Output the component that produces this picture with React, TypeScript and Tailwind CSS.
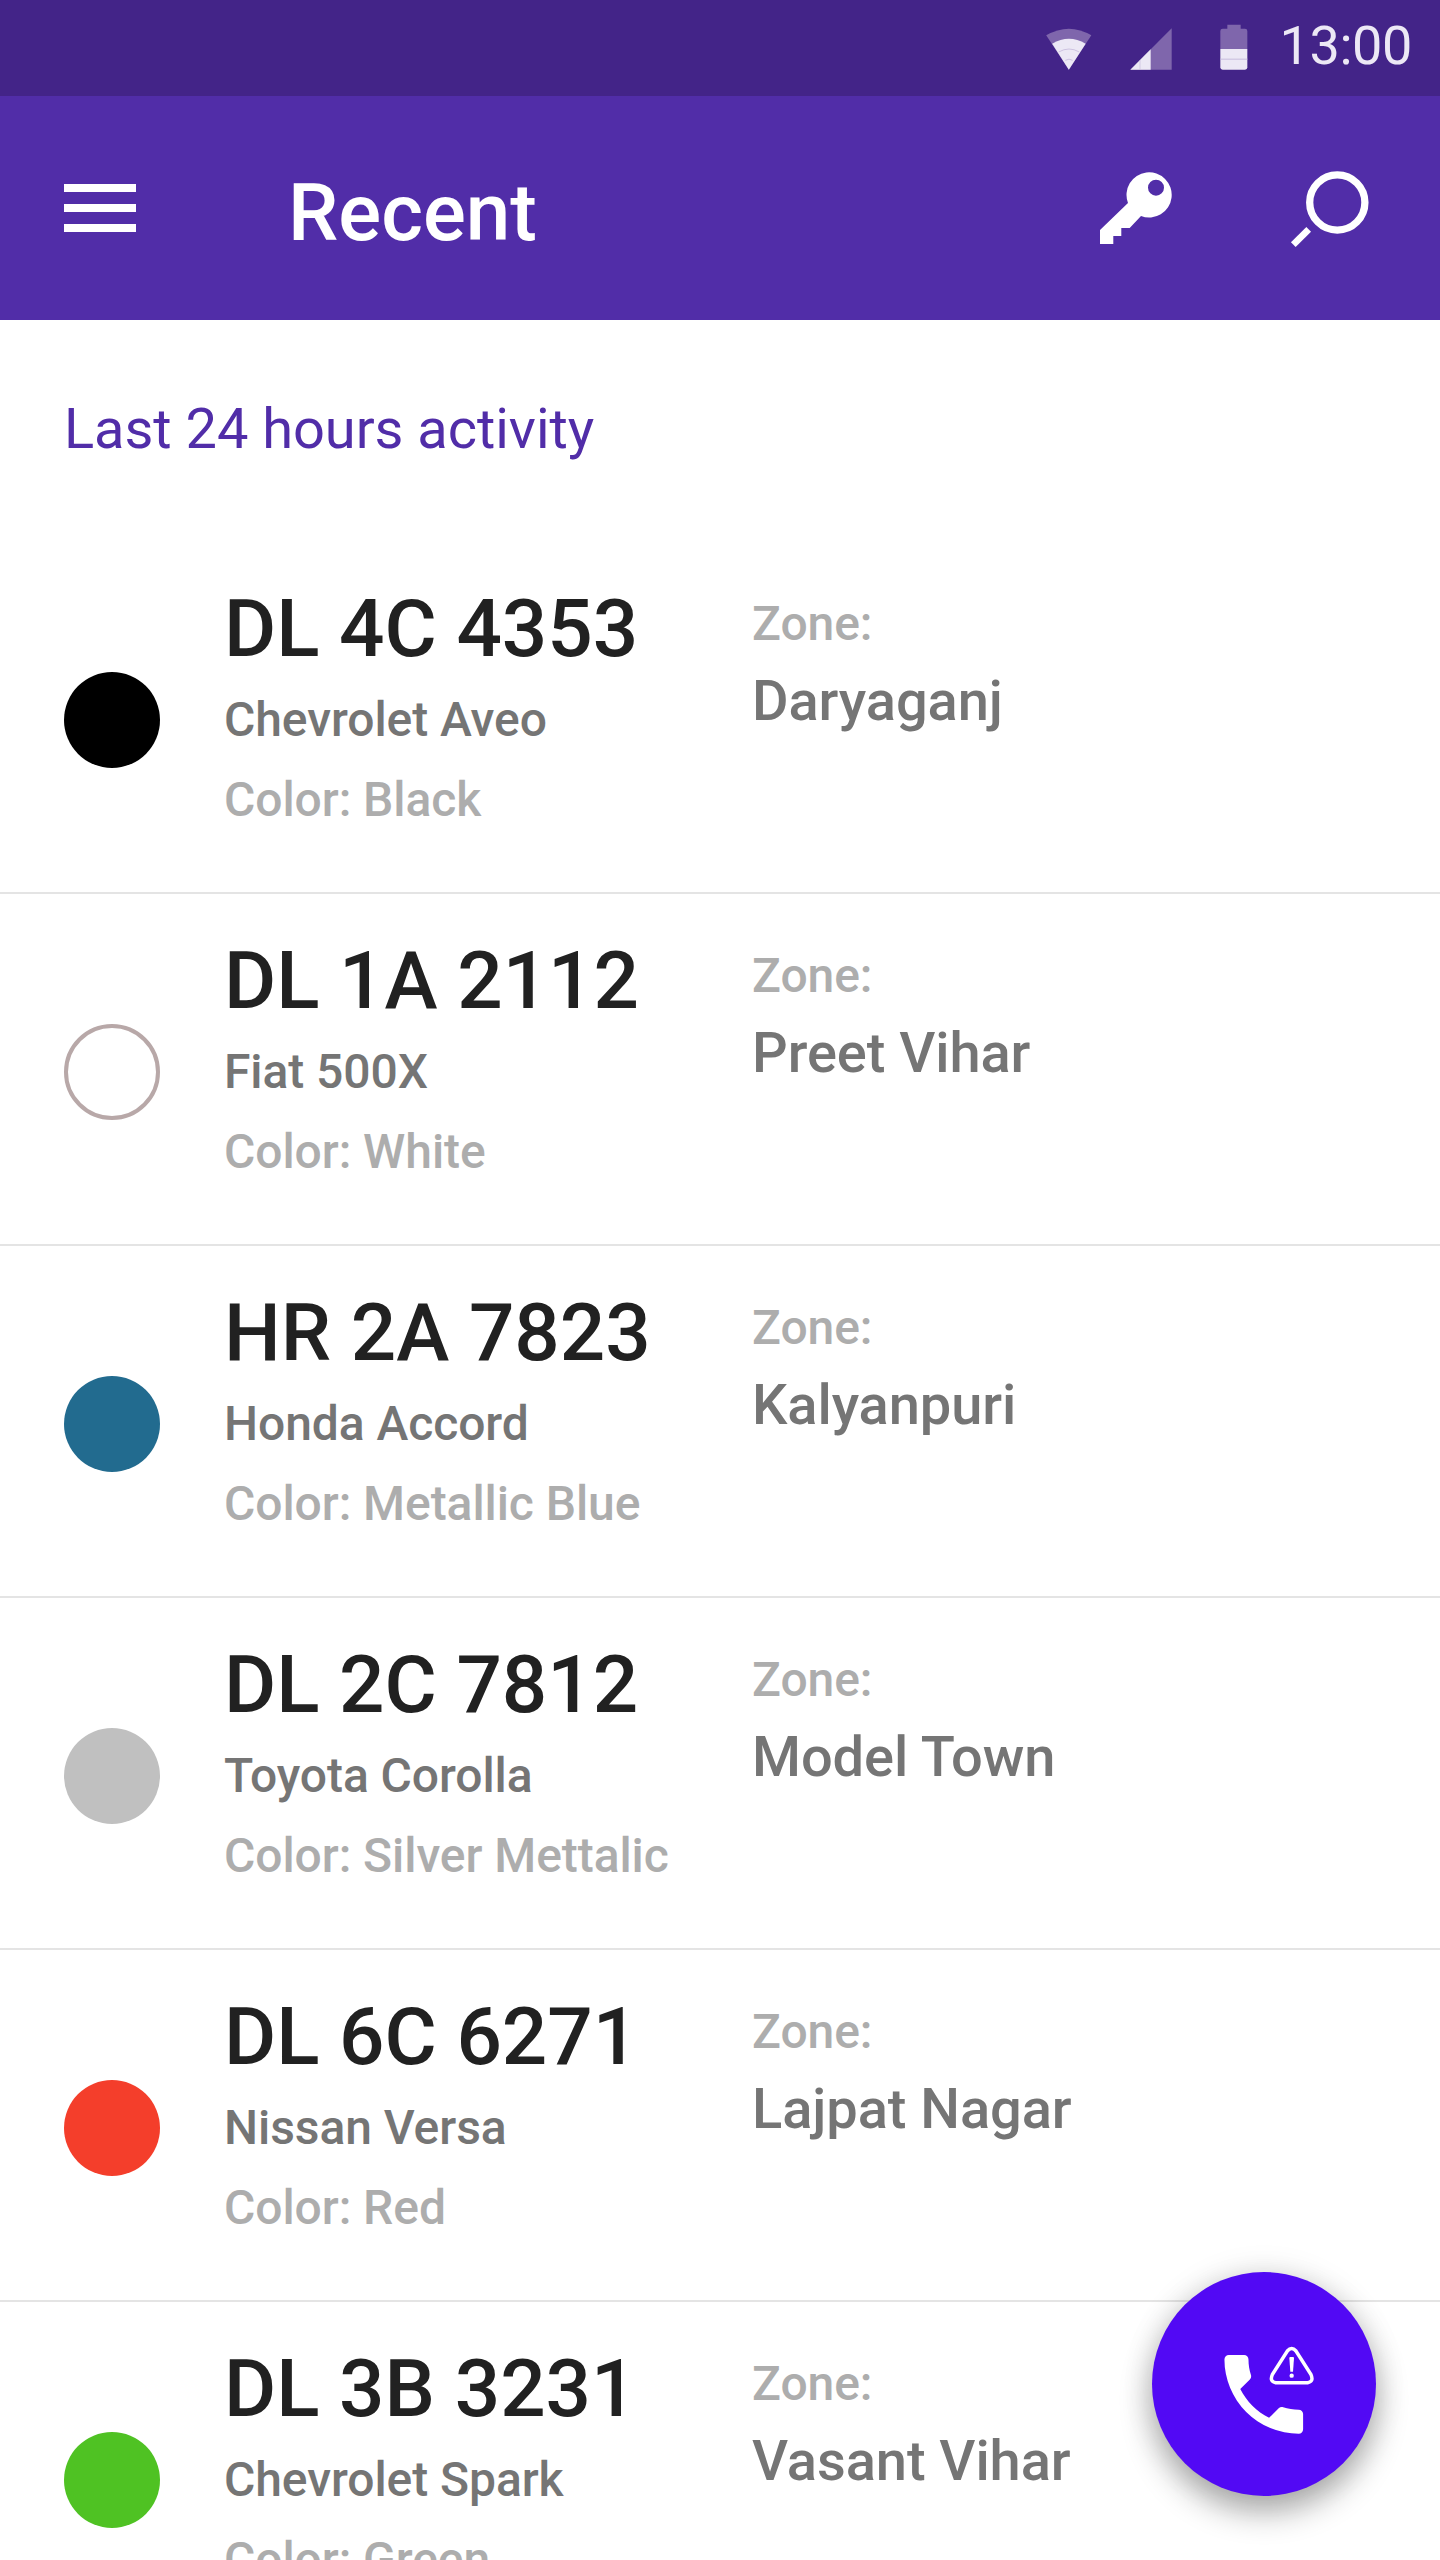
type Vehicle = {
  plate: string;
  model: string;
  color: string;
  zone: string;
  swatch: string;
};

const vehicles: Vehicle[] = [
  { plate: "DL 4C 4353", model: "Chevrolet Aveo", color: "Black", zone: "Daryaganj", swatch: "bg-black" },
  { plate: "DL 1A 2112", model: "Fiat 500X", color: "White", zone: "Preet Vihar", swatch: "bg-white border-4 border-[#b8a8a8]" },
  { plate: "HR 2A 7823", model: "Honda Accord", color: "Metallic Blue", zone: "Kalyanpuri", swatch: "bg-[#226b8f]" },
  { plate: "DL 2C 7812", model: "Toyota Corolla", color: "Silver Mettalic", zone: "Model Town", swatch: "bg-[#c0c0c0]" },
  { plate: "DL 6C 6271", model: "Nissan Versa", color: "Red", zone: "Lajpat Nagar", swatch: "bg-[#f43e2b]" },
  { plate: "DL 3B 3231", model: "Chevrolet Spark", color: "Green", zone: "Vasant Vihar", swatch: "bg-[#4fc223]" },
];

function WifiIcon() {
  return (
    <svg className="h-[42px] w-[46px]" viewBox="77 85 138 126">
      <path d="M145.500 210 77.500 107Q146 67 213 107Z" fill="#7f66ac" />
      <path d="M145.500 210 95.500 132Q146 102 196 132Z" fill="#ece8f5" />
      <path d="M115 157Q146 139 177 157M135 182Q146 175 157 182" fill="none" stroke="#c6bbdc" strokeWidth="2.500" />
    </svg>
  );
}

function SignalIcon() {
  return (
    <svg className="h-[42px] w-[42px]" viewBox="331 85 126 126">
      <path d="M332 210H456V86Z" fill="#7f66ac" />
      <path d="M332 210H393V149Z" fill="#ece8f5" />
      <path d="M361 181V210" stroke="#c6bbdc" strokeWidth="2" />
    </svg>
  );
}

function BatteryIcon() {
  return (
    <svg className="h-[46px] w-[28px]" viewBox="599 73 84 138">
      <path d="M600 148V94Q600 87 607 87H621V75H661V87H674Q681 87 681 94V148Z" fill="#7f66ac" />
      <path d="M600 148H681V203Q681 210 674 210H607Q600 210 600 203Z" fill="#ece8f5" />
      <path d="M600 178.500H681" stroke="#c6bbdc" strokeWidth="3" />
    </svg>
  );
}

function KeyIcon() {
  return (
    <svg className="size-[72px]" viewBox="40 32 72 72" fill="#fff">
      <path
        fillRule="evenodd"
        d="M68 63A22.600 22.600 0 1 1 81 76L69.700 88H61.300V96H53.300V104H40V90ZM96 39.700A8 8 0 1 0 96 55.700A8 8 0 1 0 96 39.700Z"
      />
    </svg>
  );
}

function SearchIcon() {
  return (
    <svg className="size-20" viewBox="230 30 80 80" fill="none" stroke="#fff">
      <circle cx="277.300" cy="62.500" r="27.600" strokeWidth="7.300" />
      <path d="M233.300 104.700 248.700 89.300" strokeWidth="6.600" />
    </svg>
  );
}

function CallAlertIcon() {
  return (
    <svg className="size-full" viewBox="96 96 672 672" fill="#fff">
      <path
        transform="translate(274 305.700) scale(13.110)"
        d="M6.620 10.790C8.060 13.620 10.380 15.940 13.210 17.380L15.410 15.180C15.690 14.900 16.080 14.820 16.430 14.930C17.550 15.300 18.750 15.500 20 15.500A1 1 0 0 1 21 16.500V20A1 1 0 0 1 20 21A17 17 0 0 1 3 4A1 1 0 0 1 4 3H7.500A1 1 0 0 1 8.500 4C8.500 5.250 8.700 6.450 9.070 7.570C9.180 7.920 9.100 8.310 8.820 8.590Z"
      />
      <path
        d="M502 333Q515 318 528 333L573 404Q582 425 563 428H467Q448 425 457 404Z"
        fill="none"
        stroke="#fff"
        strokeWidth="10.500"
      />
      <path d="M508 354Q508 351 511 351H519Q522 351 522 354L519 395H511Z" />
      <circle cx="515" cy="407" r="6.500" />
    </svg>
  );
}

function VehicleRow({ vehicle }: { vehicle: Vehicle }) {
  return (
    <li className="flex h-[352px] items-start border-b-2 border-[#e4e4e4] pl-16 font-medium tracking-[-0.07px]">
      <span className={`mt-[130px] size-24 shrink-0 rounded-full ${vehicle.swatch}`} />
      <div className="ml-16 w-[528px] pt-[37px] whitespace-nowrap">
        <h2 className="text-[80px] leading-[100px] text-[#212121]">{vehicle.plate}</h2>
        <p className="mt-px text-5xl/[80px] text-[#757575]">{vehicle.model}</p>
        <p className="text-5xl/[80px] text-[#adadad]">Color: {vehicle.color}</p>
      </div>
      <div className="pt-[42px] whitespace-nowrap">
        <p className="text-5xl/[80px] text-[#adadad]">Zone:</p>
        <p className="text-[56px] leading-[74px] text-[#757575]">{vehicle.zone}</p>
      </div>
    </li>
  );
}

export default function App() {
  return (
    <div className="relative h-[2560px] w-[1440px] overflow-hidden bg-white font-['Roboto',sans-serif]">
      <div className="flex h-24 items-start justify-end bg-[#432488] pr-7">
        <span className="mt-7 mr-[38px]"><WifiIcon /></span>
        <span className="mt-7 mr-[48px]"><SignalIcon /></span>
        <span className="mt-6 mr-8"><BatteryIcon /></span>
        <span className="text-[54px] leading-[92px] tracking-[-0.4px] text-[#ece8f5]">13:00</span>
      </div>
      <header className="flex h-56 items-start bg-[#512da8] pl-16 text-white">
        <button aria-label="Menu" className="mt-[88px] flex w-[72px] flex-col gap-3">
          <span className="h-2 bg-white" />
          <span className="h-2 bg-white" />
          <span className="h-2 bg-white" />
        </button>
        <h1 className="mt-[67px] ml-[152px] flex-1 text-[80px] leading-[100px] font-medium">Recent</h1>
        <button aria-label="Keys" className="mt-[76px]"><KeyIcon /></button>
        <button aria-label="Search" className="mt-[74px] mr-[70px] ml-[118px]"><SearchIcon /></button>
      </header>
      <main>
        <p className="h-[222px] pt-[69px] pl-16 text-[56px] leading-[80px] tracking-[-0.05px] text-[#512da8]">
          Last 24 hours activity
        </p>
        <ul>
          {vehicles.map((vehicle) => (
            <VehicleRow key={vehicle.plate} vehicle={vehicle} />
          ))}
        </ul>
      </main>
      <button
        aria-label="Report by phone"
        className="absolute top-[2272px] left-[1152px] size-56 rounded-full bg-[#5209f4] shadow-[0_16px_32px_rgba(0,0,0,0.32),0_0_32px_rgba(0,0,0,0.1)]"
      >
        <CallAlertIcon />
      </button>
    </div>
  );
}
